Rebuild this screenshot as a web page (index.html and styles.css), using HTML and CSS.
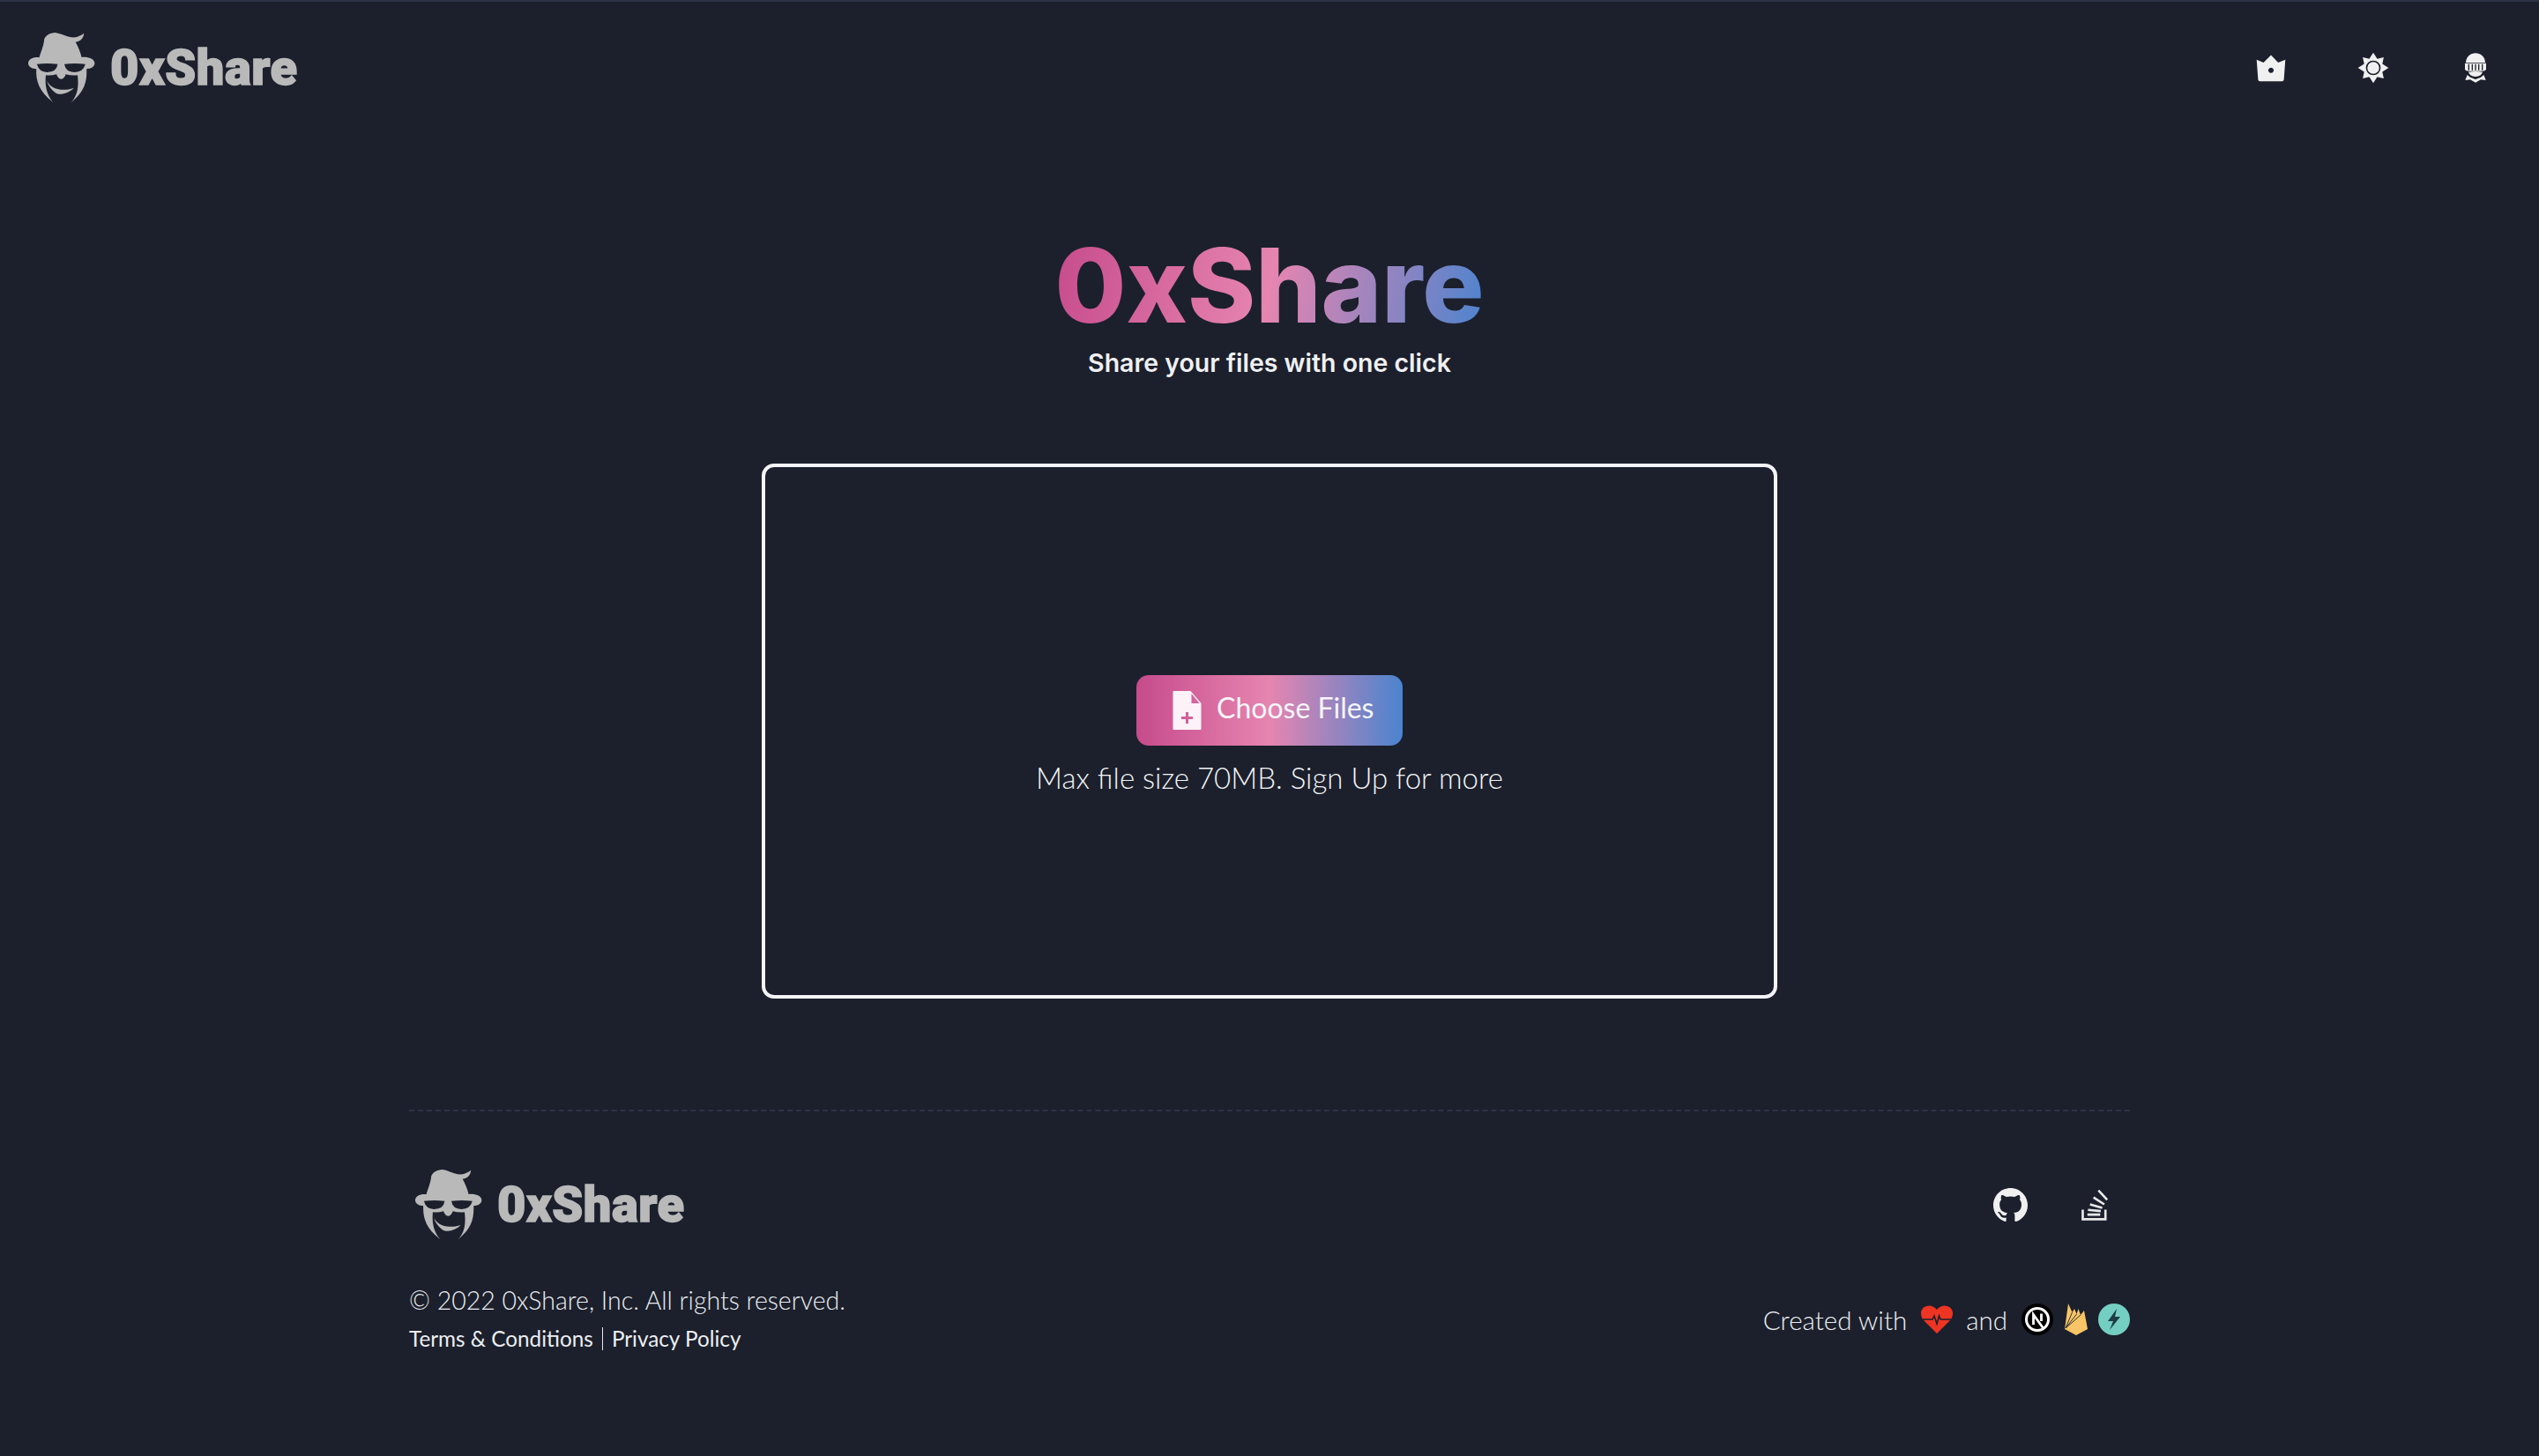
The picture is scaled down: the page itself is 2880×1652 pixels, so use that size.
FILE: index.html
```html
<!DOCTYPE html>
<html lang="en">
<head>
<meta charset="utf-8">
<title>0xShare</title>
<link rel="stylesheet" href="styles.css">
</head>
<body>
<svg class="defs" width="0" height="0" aria-hidden="true">
  <defs>
    <symbol id="mascot" viewBox="20 20 232 250">
      <path fill="#b9b9b9" d="M58 109C64 90 72 72 75 52C74 38 90 25 112 23C135 25 155 40 178 40C192 38 204 32 213 25C212 40 203 52 184 56C193 72 200 90 205 108C228 106 250 114 250 129C250 142 236 148 222 149C224 190 216 228 170 263L105 263C58 228 46 190 48 149C34 148 20 142 20 129C20 114 40 106 58 109Z"/>
      <path fill="#1b202c" d="M50 132Q85 127 122 132Q118 160 85 160Q58 160 50 132ZM145 132Q182 127 218 132Q210 160 180 160Q150 160 145 132Z"/>
      <path fill="#1b202c" d="M81 170Q100 172 118 167Q122 182 134 184Q146 182 150 167Q170 172 191 170C195 205 193 238 170 263L172 270L100 270L105 263C84 238 77 205 81 170Z"/>
      <path fill="#b9b9b9" d="M85 190C95 214 130 230 178 215C160 232 130 242 115 232C100 220 88 205 85 190Z"/>
    </symbol>
  </defs>
</svg>

<header class="topbar">
  <a class="logo" href="#">
    <svg class="logo-mark"><use href="#mascot"/></svg>
    <span class="logo-word">0xShare</span>
  </a>
  <nav class="top-actions">
    <button class="icon-btn" aria-label="Premium">
      <svg viewBox="115 90 106 100" class="top-icon"><path fill="#f0f0f0" fill-rule="evenodd" d="M120 113L143 122L168 97L192 122L216 113L211 180Q210 185 205 185L131 185Q126 185 125 180ZM168 139a9 9 0 1 0 .01 0Z"/></svg>
    </button>
    <button class="icon-btn" aria-label="Theme">
      <svg viewBox="460 88 112 112" class="top-icon"><path fill="#f0f0f0" d="M516 90L530 112L553 107L548 130L570 144L548 158L553 181L530 176L516 198L502 176L479 181L484 158L462 144L484 130L479 107L502 112Z"/><circle cx="516" cy="144" r="23.500" fill="none" stroke="#1b202c" stroke-width="5"/></svg>
    </button>
    <button class="icon-btn" aria-label="Sign in">
      <svg viewBox="812 90 104 108" class="top-icon"><path fill="#f0f0f0" d="M831 126C832 105 848 94 864 94C880 94 896 105 897 126Z"/><path fill="#f0f0f0" d="M828 128H900V150Q896 155 888 155H840Q832 155 828 150Z"/><path stroke="#1b202c" stroke-width="4" d="M841 131V152M853 131V152M864 131V152M875 131V152M887 131V152"/><path fill="#f0f0f0" d="M840 158Q864 154 888 158Q884 172 864 174Q844 172 840 158ZM836 168L846 176L864 183L882 176L892 168L899 186L882 184L864 194L846 184L829 186Z"/></svg>
    </button>
  </nav>
</header>

<main class="main">
  <h1 class="hero-title">0xShare</h1>
  <p class="hero-sub">Share your files with one click</p>
  <section class="dropzone">
    <button class="choose-btn">
      <svg class="file-icon" viewBox="0 0 32 44"><path fill="#fdf2f7" fill-rule="evenodd" d="M1 0H20L32 14V43Q32 44 31 44H1Q0 44 0 43V1Q0 0 1 0ZM21 3V14H30ZM14.500 24V29H9.500V32H14.500V37H17.500V32H22.500V29H17.500V24Z"/></svg>
      <span class="choose-label">Choose Files</span>
    </button>
    <p class="limit">Max file size 70MB. Sign Up for more</p>
  </section>
</main>

<footer class="footer">
  <div class="footer-top">
    <a class="logo logo-small" href="#">
      <svg class="logo-mark"><use href="#mascot"/></svg>
      <span class="logo-word">0xShare</span>
    </a>
    <div class="social">
      <svg class="gh" viewBox="0 0 16 16"><path fill="#f0f0f0" d="M8 0C3.58 0 0 3.58 0 8c0 3.54 2.29 6.53 5.47 7.59.4.07.55-.17.55-.38 0-.19-.01-.82-.01-1.49-2.01.37-2.53-.49-2.69-.94-.09-.23-.48-.94-.82-1.13-.28-.15-.68-.52-.01-.53.63-.01 1.08.58 1.23.82.72 1.21 1.87.87 2.33.66.07-.52.28-.87.51-1.07-1.78-.2-3.64-.89-3.64-3.95 0-.87.31-1.59.82-2.15-.08-.2-.36-1.02.08-2.12 0 0 .67-.21 2.2.82.64-.18 1.32-.27 2-.27.68 0 1.36.09 2 .27 1.53-1.04 2.2-.82 2.2-.82.44 1.1.16 1.92.08 2.12.51.56.82 1.27.82 2.15 0 3.07-1.87 3.75-3.65 3.95.29.25.54.73.54 1.48 0 1.07-.01 1.93-.01 2.2 0 .21.15.46.55.38A8.013 8.013 0 0016 8c0-4.42-3.58-8-8-8z"/></svg>
      <svg class="so" viewBox="1143 98 90 106"><path fill="none" stroke="#e8e8e8" stroke-width="8" d="M1147 166V199H1225V166"/><path stroke="#e8e8e8" stroke-width="8" d="M1163 183H1207M1165 167L1209 171M1172 148L1214 160M1184 124L1221 148M1201 100L1231 132"/></svg>
    </div>
  </div>
  <div class="footer-bottom">
    <div class="legal">
      <p class="copy">© 2022 0xShare, Inc. All rights reserved.</p>
      <p class="links"><a href="#">Terms &amp; Conditions</a><span class="sep"></span><a href="#">Privacy Policy</a></p>
    </div>
    <div class="credits">
      <span>Created with</span>
      <svg class="heart" viewBox="0 0 36 32"><path fill="#ee3524" d="M18 32L3 17C-1 12 -1 6 3 2.500C8 -1 14 0 18 5C22 0 28 -1 33 2.500C37 6 37 12 33 17Z"/><path fill="none" stroke="#1b202c" stroke-width="1.600" d="M2 16H13L15 12L18 21L20.500 12L22 16H34"/></svg>
      <span class="and">and</span>
      <svg class="tech" viewBox="0 0 36 36"><circle cx="18" cy="18" r="18" fill="#000"/><circle cx="18" cy="18" r="12.500" fill="none" stroke="#fff" stroke-width="3"/><path fill="none" stroke="#fff" stroke-width="2.800" d="M13.500 24V12.500L25 28.500M22.500 11.500V20"/></svg>
      <svg class="fire" viewBox="0 0 26 36"><path fill="#f7c566" d="M0 29L4 0L8.500 10L11 6L13.500 12L15.500 6L18 13L22 8L26 29L13 36Z"/><path fill="none" stroke="#1b202c" stroke-width=".9" d="M1 28L8.500 10M1 28L13.500 12M1 28L18 13"/></svg>
      <svg class="tech" viewBox="0 0 36 36"><circle cx="18" cy="18" r="18" fill="#74cfc2"/><path fill="#1f3c44" d="M21 6L11 20H17L13 30L25 15H19Z"/></svg>
    </div>
  </div>
</footer>
</body>
</html>
```

FILE: styles.css
```css
* { box-sizing: border-box; }
html, body { margin: 0; padding: 0; }
body {
  background: #1b202c;
  color: #e5e7eb;
  font-family: "Lato", "Liberation Sans", sans-serif;
  font-weight: 300;
  min-height: 1652px;
  border-top: 2px solid #2d3344;
}
a { color: inherit; text-decoration: none; }
p, h1 { margin: 0; }
.defs { position: absolute; }

.topbar {
  height: 150px;
  display: flex;
  align-items: center;
  justify-content: space-between;
  padding: 0 52px 0 32px;
}
.logo { display: flex; align-items: center; gap: 17px; }
.logo-mark { width: 76px; height: 82px; display: block; }
.logo-word {
  font-family: "Roboto", sans-serif;
  font-weight: 900;
  font-size: 56px;
  line-height: 1;
  color: #b9b9b9;
  -webkit-text-stroke: 1.500px #b9b9b9;
  letter-spacing: 0.500px;
}
.logo-small { margin-left: 7px; }

.top-actions { display: flex; gap: 76px; }
.icon-btn {
  width: 40px; height: 40px; padding: 0;
  background: none; border: 0;
  display: flex; align-items: center; justify-content: center;
}
.top-icon { width: 36px; height: 36px; display: block; }

.main { display: flex; flex-direction: column; align-items: center; }
.hero-title {
  margin-top: 104px;
  font-family: "Inter", sans-serif;
  font-weight: 800;
  font-size: 117px;
  line-height: 136px;
  background: linear-gradient(100deg, #c64b8c, #e685b0 50%, #4a84cf);
  -webkit-background-clip: text;
  background-clip: text;
  color: transparent;
}
.hero-sub {
  font-family: "Inter", sans-serif;
  font-weight: 600;
  font-size: 28.500px;
  line-height: 40px;
  color: #f0f0f3;
}
.dropzone {
  margin-top: 94px;
  width: 1152px;
  height: 607px;
  border: 4px solid #f3f4f8;
  border-radius: 14px;
  padding-top: 12px;
  display: flex;
  flex-direction: column;
  align-items: center;
  justify-content: center;
  gap: 12px;
}
.choose-btn {
  width: 302px;
  height: 80px;
  border: 0;
  border-radius: 14px;
  padding: 0 0 0 40px;
  background: linear-gradient(90deg, #c64b8c, #e685b0 50%, #4a84cf);
  color: #f5f5fa;
  display: flex;
  align-items: center;
  gap: 16px;
  font-family: inherit;
  font-weight: 400;
  font-size: 32px;
}
.choose-label { padding-bottom: 6px; }
.file-icon { width: 35px; height: 44px; display: block; }
.limit { font-size: 33px; line-height: 48px; color: #f3f4f6; }

.footer { width: 1952px; margin: 126px auto 0; border-top: 2px dashed #2d3344; }
.footer-top {
  height: 164px;
  margin-top: 24px;
  margin-bottom: 6px;
  display: flex;
  align-items: center;
  justify-content: space-between;
}
.social { display: flex; align-items: center; gap: 61px; padding-right: 25px; }
.gh { width: 39px; height: 39px; display: block; }
.so { width: 30px; height: 35px; display: block; }
.footer-bottom { display: flex; align-items: center; justify-content: space-between; color: #eceef1; }
.copy { font-size: 28.500px; line-height: 40px; }
.links { font-size: 24.300px; line-height: 40px; font-weight: 400; display: flex; align-items: center; margin-top: 4px; }
.sep { width: 1px; height: 26px; background: #e5e7eb; margin: 0 10px; }
.credits { display: flex; align-items: center; font-size: 29.500px; }
.heart { width: 36px; height: 32px; margin-left: 16px; display: block; }
.and { margin: 0 16px 0 15px; }
.tech { width: 36px; height: 36px; display: block; }
.fire { width: 26px; height: 36px; margin: 0 12px 0 13px; display: block; }
```
